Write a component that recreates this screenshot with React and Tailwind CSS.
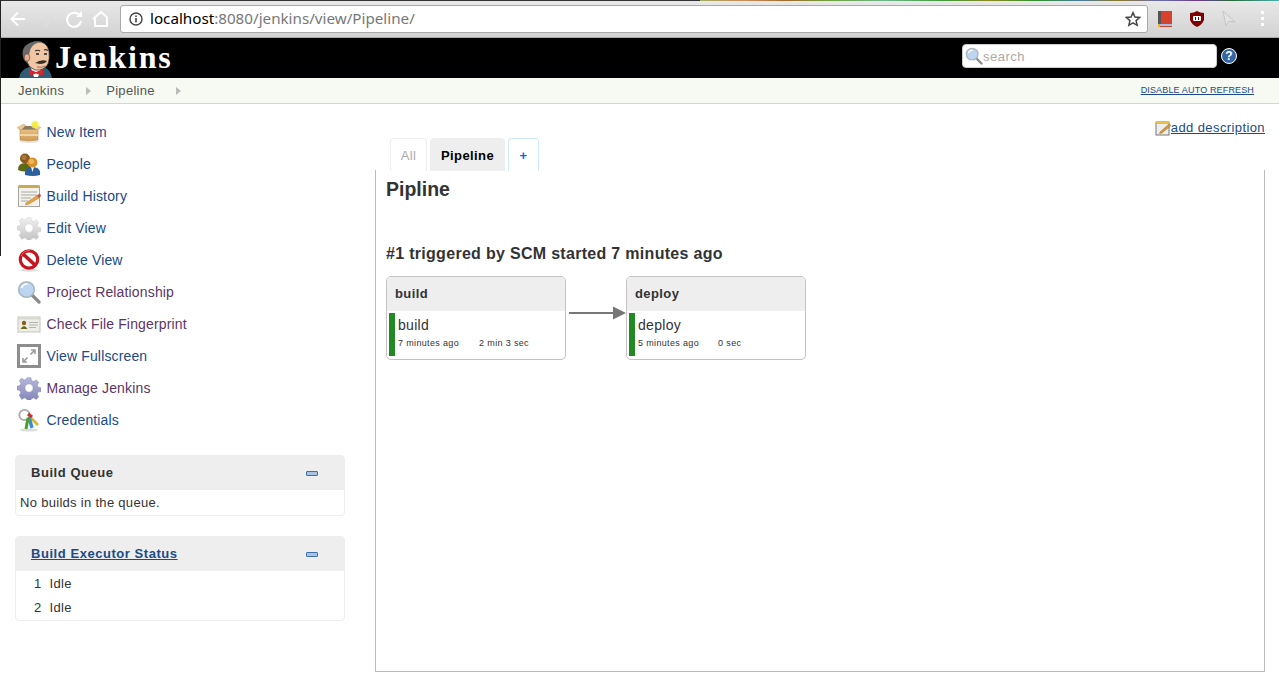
import React from 'react';

const NAVY = '#204a87';
const PURPLE = '#5c3566';

const GEAR_PATH = 'M10 .8h4l.6 3.2 2.5 1 2.7-1.8 2.8 2.8-1.8 2.7 1 2.5 3.2.6v4l-3.2.6-1 2.5 1.8 2.7-2.8 2.8-2.7-1.8-2.5 1-.6 1.6h-4l-.6-1.6-2.5-1-2.7 1.8L1.400 19.800l1.800-2.700-1-2.500L-1 14v-4l3.200-.6 1-2.500L1.400 4.200 4.200 1.400 6.900 3.200l2.500-1z';

function NewItemIcon() {
  return (
    <svg width="24" height="24" viewBox="0 0 24 24">
      <defs>
        <linearGradient id="box" x1="0" y1="0" x2="0" y2="1">
          <stop offset="0" stopColor="#e9c184" />
          <stop offset="1" stopColor="#cf9a55" />
        </linearGradient>
      </defs>
      <ellipse cx="12" cy="21.500" rx="10" ry="1.500" fill="#e3e3e3" />
      <path d="M3 9 L21 9 L21 20 Q12 21.500 3 20Z" fill="url(#box)" stroke="#b98845" strokeWidth="0.6" />
      <path d="M3 10 L0 7.500 L7 4 L10 6.500Z" fill="#e8c894" stroke="#c79c5e" strokeWidth="0.4" />
      <path d="M21 10 L24 7.500 L17 4 L14 6.500Z" fill="#e8c894" stroke="#c79c5e" strokeWidth="0.4" />
      <path d="M5 9.500 L19 9.500 L16 6 L8 6Z" fill="#8c7a5e" />
      <rect x="3" y="14" width="18" height="2" fill="#f1d6a5" />
      <circle cx="18" cy="4.500" r="4" fill="#f6f07a" opacity="0.7" />
      <circle cx="18" cy="4.500" r="2.600" fill="#f3ee30" />
    </svg>
  );
}

function PeopleIcon() {
  return (
    <svg width="24" height="24" viewBox="0 0 24 24">
      <path d="M1 18 Q1 11 8 11 Q14 11 14 18 Q8 21 1 18Z" fill="#5e6b12" />
      <circle cx="8" cy="6.500" r="5" fill="#8a5a1e" />
      <circle cx="7" cy="5.500" r="2.500" fill="#a97a3a" />
      <path d="M8 23 Q7 15 15.500 15 Q24 15 23 23 Q16 25 8 23Z" fill="#2c5f9e" />
      <path d="M14 15 L17 15 L15.500 20Z" fill="#fff" />
      <circle cx="15.500" cy="10.500" r="5" fill="#d8912f" />
      <circle cx="14.500" cy="9.500" r="2.500" fill="#efb660" />
    </svg>
  );
}

function HistoryIcon() {
  return (
    <svg width="24" height="24" viewBox="0 0 24 24">
      <rect x="1.500" y="2.500" width="21" height="20" fill="#f3f3ec" stroke="#a6a6a0" />
      <rect x="1.500" y="1" width="21" height="3" fill="#c9ab55" />
      <path d="M4 8h16M4 11h16M4 14h10M4 17h7" stroke="#a9a9a9" strokeWidth="1" />
      <path d="M9 19 L20 11.500 L22 14 L11 20.500 L8.500 20.800Z" fill="#e8a33c" stroke="#a5652a" strokeWidth="0.4" />
      <path d="M20 11.500 L23 9.500 L24 12 L22 14Z" fill="#cc4c4c" />
    </svg>
  );
}

function Gear({ id, from, to, stroke }) {
  return (
    <svg width="24" height="24" viewBox="-1 -1 26 26">
      <defs>
        <linearGradient id={id} x1="0" y1="0" x2="0" y2="1">
          <stop offset="0" stopColor={from} />
          <stop offset="1" stopColor={to} />
        </linearGradient>
      </defs>
      <path d={GEAR_PATH} fill={`url(#${id})`} stroke={stroke} strokeWidth="0.5" />
      <circle cx="12" cy="12" r="4.500" fill="#fff" stroke={stroke} strokeWidth="0.5" />
    </svg>
  );
}

function DeleteIcon() {
  return (
    <svg width="24" height="24" viewBox="0 0 24 24">
      <ellipse cx="12" cy="22.300" rx="9" ry="1.500" fill="#ddd" />
      <circle cx="12" cy="11.500" r="8.700" fill="#fff" stroke="#c4161c" strokeWidth="3.200" />
      <path d="M5.500 5.500 L18.500 17.500" stroke="#c4161c" strokeWidth="3.600" />
      <path d="M4 8 Q7 2 13 2.500" stroke="#ea7a7a" strokeWidth="0.8" fill="none" />
    </svg>
  );
}

function LensIcon({ size = 24 }) {
  return (
    <svg width={size} height={size} viewBox="0 0 24 24">
      <path d="M15 15 L22 22" stroke="#8a8a8a" strokeWidth="3.200" strokeLinecap="round" />
      <circle cx="9.500" cy="9.500" r="7.800" fill="#bcd6f0" stroke="#a9b4bf" strokeWidth="1.600" />
      <path d="M4.500 8 Q6 4 10.500 4" stroke="#fff" strokeWidth="1.600" fill="none" />
    </svg>
  );
}

function FingerprintIcon() {
  return (
    <svg width="24" height="24" viewBox="0 0 24 24">
      <rect x="1" y="5" width="22" height="15" fill="#eeeee8" stroke="#c4c4be" />
      <rect x="1.500" y="5.500" width="21" height="2" fill="#d9d9d0" />
      <circle cx="7" cy="11" r="2.200" fill="#8a5f1e" />
      <path d="M3.500 17 Q7 11 10.500 17Z" fill="#6d6a1e" />
      <path d="M12 10.500h9M12 13h9M12 15.500h7" stroke="#b5b5b0" />
    </svg>
  );
}

function FullscreenIcon() {
  return (
    <svg width="24" height="24" viewBox="0 0 24 24">
      <rect x="1.500" y="1.500" width="21" height="21" fill="#fff" stroke="#8e8e8e" strokeWidth="3" />
      <path d="M13.500 10.500 L18 6 M14 6 H18 V10 M10.500 13.500 L6 18 M10 18 H6 V14" stroke="#9a9a9a" strokeWidth="1.600" fill="none" />
    </svg>
  );
}

function CredentialsIcon() {
  return (
    <svg width="24" height="24" viewBox="0 0 24 24">
      <ellipse cx="12" cy="22" rx="9" ry="1.600" fill="#ddd" />
      <circle cx="7.500" cy="7" r="5.200" fill="none" stroke="#a9a9a9" strokeWidth="1.800" />
      <path d="M13 9 L21 17" stroke="#d8b73c" strokeWidth="3" />
      <path d="M12 9 L15 20" stroke="#3a8ed0" strokeWidth="3.400" />
      <path d="M11 10 L9 21" stroke="#4f9e2a" strokeWidth="3" />
      <path d="M11 6 L15 9" stroke="#c8352c" strokeWidth="3.400" />
    </svg>
  );
}

const TASKS = [
  { label: 'New Item', icon: <NewItemIcon />, color: NAVY },
  { label: 'People', icon: <PeopleIcon />, color: NAVY },
  { label: 'Build History', icon: <HistoryIcon />, color: NAVY },
  { label: 'Edit View', icon: <Gear id="gearSilver" from="#f0f0f0" to="#c4c4c4" stroke="#c9c9c9" />, color: NAVY },
  { label: 'Delete View', icon: <DeleteIcon />, color: NAVY },
  { label: 'Project Relationship', icon: <LensIcon />, color: PURPLE },
  { label: 'Check File Fingerprint', icon: <FingerprintIcon />, color: PURPLE },
  { label: 'View Fullscreen', icon: <FullscreenIcon />, color: NAVY },
  { label: 'Manage Jenkins', icon: <Gear id="gearBlue" from="#b6b8dc" to="#8587ba" stroke="#7a7ca8" />, color: PURPLE },
  { label: 'Credentials', icon: <CredentialsIcon />, color: NAVY },
];

function Butler() {
  return (
    <svg width="36" height="38" viewBox="0 0 36 38" className="block">
      <path d="M1 38 Q2 30 11 27 L26 27 Q33 30 34 38Z" fill="#2f5a78" />
      <path d="M13 28 L24 28 L20 37 L16 37Z" fill="#fff" />
      <path d="M7 15 Q6 3 18 1.500 Q29 1 31 11 Q32 19 30 24 Q26 31 17 30 Q11 28 9 22Z" fill="#f0c6a5" stroke="#2a2a2a" strokeWidth="0.7" />
      <path d="M6 20 Q1 7 13 2.500 Q19 .5 24 2 Q15 3 12.500 9 Q11 15 10 17 L9 23Z" fill="#6a6a6a" />
      <ellipse cx="9" cy="17.500" rx="2.800" ry="3.800" fill="#e8b08e" stroke="#4a3a30" strokeWidth="0.6" />
      <path d="M17 11 Q20 9.500 22 11M26 10 Q28 9 30 10.500" stroke="#333" strokeWidth="1.200" fill="none" />
      <path d="M18 14h3M26 14h3" stroke="#222" strokeWidth="1.400" />
      <path d="M17 23 Q23 19 29 21 Q27 24 22 24Z" fill="#3a2e28" />
      <path d="M19 27 Q24 28 27 26" stroke="#7a4a3a" strokeWidth="0.7" fill="none" />
      <path d="M11 29 L18 32 L25 29 L25 36 L18 33.500 L11 36Z" fill="#d3262a" />
    </svg>
  );
}

function Minus() {
  return <span className="block w-[12px] h-[5px] bg-[#a8c3e2] border border-[#3f70ad] rounded-[1px]" />;
}

function Pane({ title, link, children }) {
  return (
    <div className="border border-[#eee] rounded-[4px] overflow-hidden">
      <div className="h-[34px] bg-[#eee] flex items-center justify-between pl-[15px] pr-[26px] font-bold text-[13px] tracking-[0.55px] text-[#333]">
        {link ? <a className="underline text-[#204a87]">{title}</a> : <span>{title}</span>}
        <Minus />
      </div>
      {children}
    </div>
  );
}

function Stage({ name, when, took, gap }) {
  return (
    <div className="w-[180px] h-[84px] border border-[#c3c3c3] rounded-[5px] overflow-hidden flex flex-col shrink-0">
      <div className="h-[34px] bg-[#eee] flex items-center pl-[8px] font-bold text-[13px] tracking-[0.4px] text-[#333]">{name}</div>
      <div className="flex-1 flex pl-[2px] pt-[2px] pb-[3px]">
        <div className="w-[6px] bg-[#218a25]" />
        <div className="pl-[3px]">
          <div className="text-[14px] leading-[20px] mt-[2px] text-[#333]">{name}</div>
          <div className="flex text-[9px] leading-[12px] mt-[2px] tracking-[0.35px] text-[#333]" style={{ gap }}>
            <span>{when}</span>
            <span>{took}</span>
          </div>
        </div>
      </div>
    </div>
  );
}

export default function App() {
  return (
    <div className="relative w-[1279px] h-[673px] overflow-hidden bg-white text-[#333] tracking-[0.3px] font-['Liberation_Sans',Arial,sans-serif]">
      {/* browser chrome */}
      <div className="h-[38px] bg-gradient-to-b from-[#e9e9e9] to-[#d2d2d2] border-b border-[#a8a8a8] flex items-center pl-[8px] relative">
        <div className="absolute left-0 top-0 w-[700px] h-[1px] bg-[#333]" />
        <div className="absolute right-0 top-0 w-[579px] h-[1px] bg-[linear-gradient(90deg,#a4ab62,#c98c5a_8%,#a06a2a_15%,#6f9f3a_22%,#6fb58c_32%,#3f9a3a_42%,#8a8a20_50%,#2f8f2f_58%,#4a7a9a_66%,#8a7a30_72%,#6a6ab0_80%,#6a3a8a_86%,#2a6a3a_92%,#4ab0b0_100%)]" />
        <svg width="100" height="24" viewBox="0 0 100 24" className="shrink-0">
          <g fill="none" stroke="#fff" strokeWidth="2">
            <path d="M17 12H3.500M10 5.500 L3.500 12 L10 18.500" />
            <path d="M30 12H43.500M37 5.500 L43.500 12 L37 18.500" stroke="#dedede" />
            <path d="M72 9 A7 7 0 1 0 73 14" />
          </g>
          <path d="M74 4 V10 H68Z" fill="#fff" />
          <path d="M86 12 L94 5 L102 12 M88 11 V19 H100 V11" fill="none" stroke="#fff" strokeWidth="2" transform="translate(-1 0)" />
        </svg>
        <div className="ml-[12px] w-[1028px] h-[28px] bg-white border border-[#a9a9a9] rounded-[3px] flex items-center pl-[8px] pr-[6px] font-['Noto_Sans',sans-serif] tracking-normal text-[15.200px]">
          <svg width="14" height="14" viewBox="0 0 14 14" className="shrink-0">
            <circle cx="7" cy="7" r="6" fill="none" stroke="#444" strokeWidth="1.400" />
            <rect x="6.200" y="6" width="1.600" height="4.400" fill="#444" />
            <rect x="6.200" y="3.400" width="1.600" height="1.600" fill="#444" />
          </svg>
          <span className="ml-[7px] text-black">localhost</span>
          <span className="text-[#777]">:8080/jenkins/view/Pipeline/</span>
          <svg width="16" height="16" viewBox="0 0 24 24" className="ml-auto">
            <path d="M12 2.500 L14.900 9 L22 9.700 L16.600 14.400 L18.200 21.400 L12 17.700 L5.800 21.400 L7.400 14.400 L2 9.700 L9.100 9Z" fill="none" stroke="#444" strokeWidth="2.200" />
          </svg>
        </div>
        <div className="flex items-center ml-[10px] gap-[18px]">
          <svg width="14" height="16" viewBox="0 0 14 16">
            <rect x="0" y="0" width="14" height="16" fill="#d9412f" />
            <rect x="0" y="0" width="3" height="14" fill="#555" />
            <rect x="1" y="13" width="13" height="2" fill="#9fc2e8" />
            <rect x="0" y="13" width="2" height="3" fill="#e3b52c" />
          </svg>
          <svg width="14" height="16" viewBox="0 0 14 16">
            <path d="M0 2 Q4 2 7 0 Q10 2 14 2 V9 Q12 14 7 16 Q2 14 0 9Z" fill="#800000" />
            <rect x="3" y="5" width="8" height="5" rx="1" fill="#fff" />
            <rect x="5" y="6" width="1" height="3" fill="#800000" />
            <rect x="8" y="6" width="1" height="3" fill="#800000" />
          </svg>
          <svg width="14" height="16" viewBox="0 0 14 16">
            <path d="M1 0 L13 11 L7 10 L4 15Z" fill="#e4e4e4" stroke="#c4c4c4" />
          </svg>
          <span className="flex flex-col gap-[3px] ml-[7px]">
            <span className="block w-[3px] h-[3px] bg-white" />
            <span className="block w-[3px] h-[3px] bg-white" />
            <span className="block w-[3px] h-[3px] bg-white" />
          </span>
        </div>
      </div>

      {/* jenkins header */}
      <div className="h-[40px] bg-black flex items-end pl-[18px] relative">
        <Butler />
        <span className="ml-[1px] mb-[3px] font-['Liberation_Serif',serif] font-bold text-[32px] leading-[36px] tracking-[1.800px] text-white">Jenkins</span>
        <div className="absolute left-[962px] top-[6px] flex items-center">
          <div className="w-[255px] h-[24px] bg-white border border-[#ccc] rounded-[4px] flex items-center pl-[2px]">
            <LensIcon size={18} />
            <span className="mt-[1px] text-[13px] tracking-[0.5px] text-[#aaa]">search</span>
          </div>
          <span className="ml-[4px] w-[16px] h-[16px] rounded-full bg-[#3465a4] border border-white flex items-center justify-center text-white text-[12px] font-bold tracking-normal">?</span>
        </div>
      </div>

      {/* breadcrumbs */}
      <div className="h-[26px] bg-[#f6faf2] border-b border-[#d3d7cf] flex items-center pl-[18px] text-[13px] text-[#555]">
        <span>Jenkins</span>
        <span className="ml-[22px] w-0 h-0 border-y-[4px] border-y-transparent border-l-[5px] border-l-[#bbb]" />
        <span className="ml-[15px]">Pipeline</span>
        <span className="ml-[21px] w-0 h-0 border-y-[4px] border-y-transparent border-l-[5px] border-l-[#bbb]" />
        <a className="ml-auto mr-[25px] underline text-[9px] tracking-[0.15px] text-[#204a87]">DISABLE AUTO REFRESH</a>
      </div>

      <div className="absolute left-0 top-0 w-[1px] h-[256px] bg-[#222]" />

      <div className="flex h-[569px]">
        {/* sidebar */}
        <div className="w-[375px] shrink-0 pl-[15px] pt-[12px]">
          <div className="flex flex-col">
            {TASKS.map((t) => (
              <div key={t.label} className="h-[32px] flex items-center pl-[2px]">
                <span className="w-[24px] h-[24px] shrink-0">{t.icon}</span>
                <a className="ml-[5.500px] text-[14px] tracking-[0.15px]" style={{ color: t.color }}>{t.label}</a>
              </div>
            ))}
          </div>
          <div className="w-[330px] mt-[19px] flex flex-col gap-[20px]">
            <Pane title="Build Queue">
              <div className="h-[25px] pl-[4px] text-[13px] leading-[25px]">No builds in the queue.</div>
            </Pane>
            <Pane title="Build Executor Status" link>
              <div className="pl-[18px] pt-[1px] text-[13px]">
                <div className="h-[24px] flex items-center gap-[8px]"><span>1</span><span>Idle</span></div>
                <div className="h-[24px] flex items-center gap-[8px]"><span>2</span><span>Idle</span></div>
              </div>
            </Pane>
          </div>
        </div>

        {/* main */}
        <div className="relative flex-1 mr-[14px] flex flex-col">
          <div className="h-[66px] flex items-end pl-[15px] gap-[3px] relative">
            <div className="absolute right-0 top-[14px] flex items-center">
              <svg width="16" height="16" viewBox="0 0 16 16">
                <rect x="1" y="2" width="13" height="13" fill="#eee" stroke="#777" />
                <rect x="1" y="1" width="13" height="3" fill="#e4c04a" />
                <path d="M5 12 L14 4 L16 5.500 L7 13 L4.500 13.500Z" fill="#d89a34" stroke="#7a5a22" strokeWidth="0.400" />
              </svg>
              <a className="underline text-[13px] tracking-[0.4px] text-[#204a87]">add description</a>
            </div>
            <div className="w-[37px] h-[33px] -mb-[1px] pt-[2px] border border-b-0 border-[#eee] rounded-t-[4px] flex items-center justify-center text-[13px] text-[#aaa]">All</div>
            <div className="w-[75px] h-[33px] -mb-[1px] pt-[2px] bg-[#eee] rounded-t-[4px] flex items-center justify-center font-bold text-[13px] tracking-[0.4px] text-black">Pipeline</div>
            <div className="w-[31px] h-[33px] -mb-[1px] pt-[2px] border border-b-0 border-[#cfe8fb] rounded-t-[4px] flex items-center justify-center font-bold text-[13px] text-[#0b6ad8]">+</div>
          </div>
          <div className="flex-1 border border-t-0 border-[#bbb] mb-[1px] pl-[10px]">
            <h1 className="mt-[6px] font-bold text-[19.500px] leading-[26px] tracking-normal text-[#333]">Pipline</h1>
            <h2 className="mt-[41px] font-bold text-[16px] leading-[22px] tracking-[0.3px] text-[#333]">#1 triggered by SCM started 7 minutes ago</h2>
            <div className="mt-[11px] flex">
              <Stage name="build" when="7 minutes ago" took="2 min 3 sec" gap={20} />
              <svg width="60" height="84" viewBox="0 0 60 84" className="shrink-0">
                <path d="M3 37 H48" stroke="#777" strokeWidth="2" />
                <path d="M47 30.500 L60 37 L47 43.500Z" fill="#777" />
              </svg>
              <Stage name="deploy" when="5 minutes ago" took="0 sec" gap={19} />
            </div>
          </div>
        </div>
      </div>
    </div>
  );
}
